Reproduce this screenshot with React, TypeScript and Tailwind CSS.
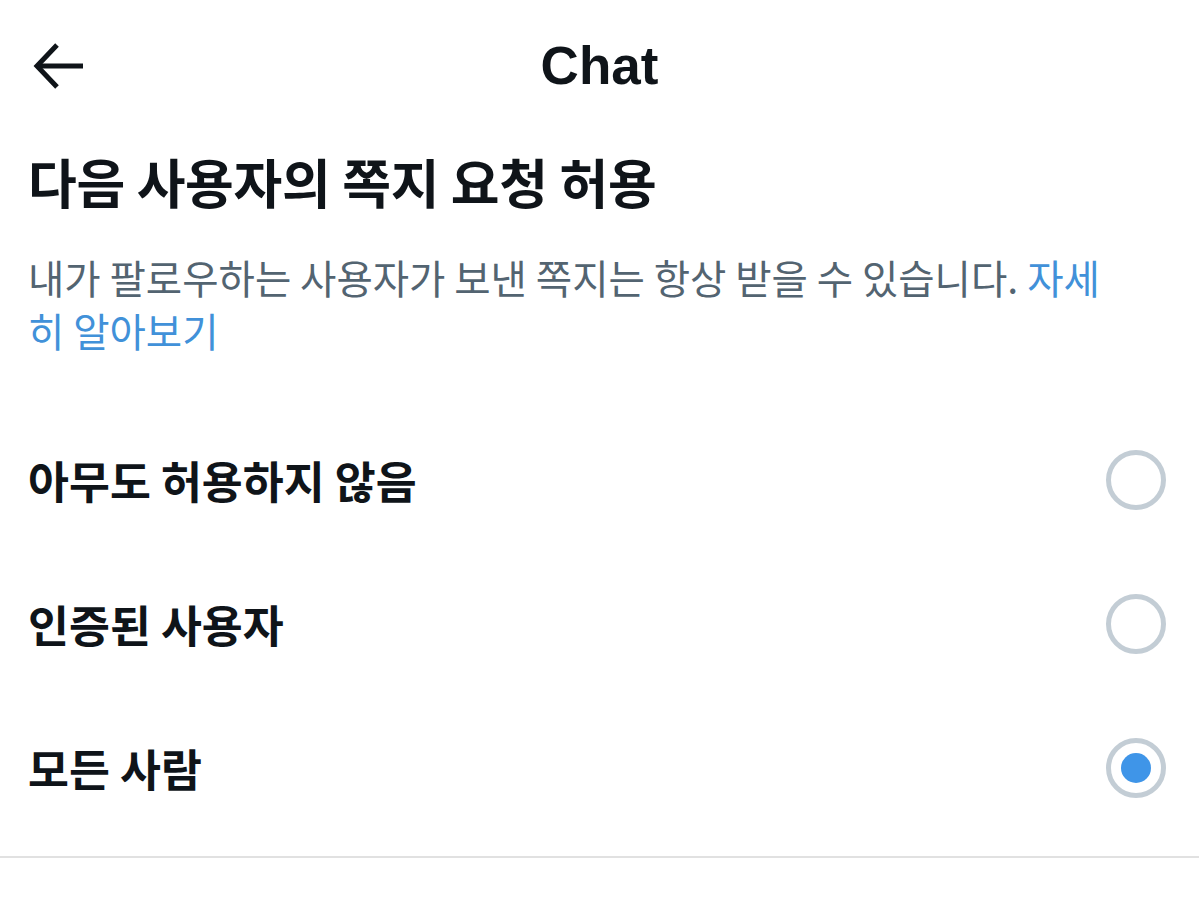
import React, { useState } from 'react';

const options = ['아무도 허용하지 않음', '인증된 사용자', '모든 사람'];

function BackArrow() {
  return (
    <svg width="52" height="46" viewBox="0 0 52 46" fill="none" stroke="#0f1419" strokeWidth="5" strokeLinecap="butt" strokeLinejoin="miter">
      <path d="M4 23 H50" />
      <path d="M24 2 L4 23 L24 44" />
    </svg>
  );
}

function Radio({ checked }: { checked: boolean }) {
  return (
    <div className="w-[60px] h-[60px] rounded-full border-[5px] border-[#c3cdd5] flex items-center justify-center">
      {checked && <div className="w-[30px] h-[30px] rounded-full bg-[#3f95e8]" />}
    </div>
  );
}

export default function App() {
  const [selected, setSelected] = useState(2);

  return (
    <div className="w-[1199px] h-[900px] bg-white overflow-hidden" style={{ fontFamily: '"Noto Sans CJK KR", "Liberation Sans", sans-serif' }}>
      {/* Header */}
      <div className="h-[132px] grid grid-cols-[1fr_auto_1fr] items-center">
        <div className="pl-[33px] flex items-center">
          <BackArrow />
        </div>
        <div className="text-[53px] font-bold text-[#0f1419]" style={{ fontFamily: '"Liberation Sans", sans-serif' }}>
          Chat
        </div>
        <div />
      </div>

      <div className="px-[28px]">
        <h1 className="mt-[19px] text-[53px] leading-[60px] font-bold text-[#0f1419] tracking-[-0.3px]">
          다음 사용자의 쪽지 요청 허용
        </h1>
        <p className="mt-[39px] w-[1100px] text-[39.5px] leading-[53px] text-[#536471]">
          내가 팔로우하는 사용자가 보낸 쪽지는 항상 받을 수 있습니다.{' '}
          <span className="text-[#4191d9]">자세히 알아보기</span>
        </p>
      </div>

      <div className="mt-[52px]">
        {options.map((label, i) => (
          <div
            key={label}
            onClick={() => setSelected(i)}
            className="h-[144px] flex items-center justify-between pl-[28px] pr-[33px] cursor-pointer"
          >
            <span className="text-[44.5px] font-bold text-[#0f1419]">{label}</span>
            <Radio checked={selected === i} />
          </div>
        ))}
      </div>

      <div className="mt-[16px] border-t-2 border-[#e1e1e1]" />
    </div>
  );
}
